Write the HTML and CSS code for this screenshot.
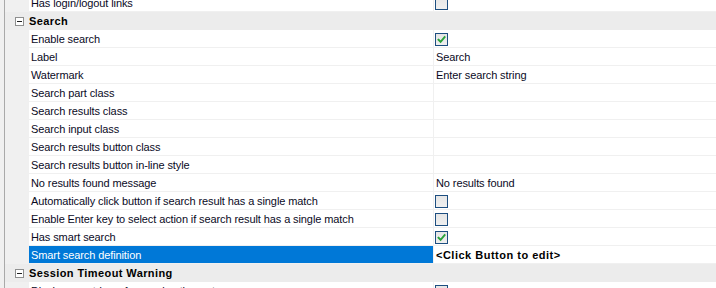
FILE: index.html
```html
<!DOCTYPE html>
<html>
<head>
<meta charset="utf-8">
<link rel="stylesheet" href="styles.css">
</head>
<body>
<div class="panel">
  <div class="grid">
    <div class="row first">
      <div class="gutter"></div>
      <div class="name">Has login/logout links</div>
      <div class="value"><span class="cb"></span></div>
    </div>
    <div class="row cat">
      <div class="gutter"><span class="toggle"></span></div>
      <div class="cat-name">Search</div>
    </div>
    <div class="row">
      <div class="gutter"></div>
      <div class="name">Enable search</div>
      <div class="value"><span class="cb checked"><svg viewBox="0 0 11 11" width="11" height="11"><path d="M2.5 5.8 L4.6 7.8 L8.6 3.2" fill="none" stroke="#2aa23a" stroke-width="1.9" stroke-linecap="square"/></svg></span></div>
    </div>
    <div class="row">
      <div class="gutter"></div>
      <div class="name">Label</div>
      <div class="value">Search</div>
    </div>
    <div class="row">
      <div class="gutter"></div>
      <div class="name">Watermark</div>
      <div class="value">Enter search string</div>
    </div>
    <div class="row">
      <div class="gutter"></div>
      <div class="name">Search part class</div>
      <div class="value"></div>
    </div>
    <div class="row">
      <div class="gutter"></div>
      <div class="name">Search results class</div>
      <div class="value"></div>
    </div>
    <div class="row">
      <div class="gutter"></div>
      <div class="name">Search input class</div>
      <div class="value"></div>
    </div>
    <div class="row">
      <div class="gutter"></div>
      <div class="name">Search results button class</div>
      <div class="value"></div>
    </div>
    <div class="row">
      <div class="gutter"></div>
      <div class="name">Search results button in-line style</div>
      <div class="value"></div>
    </div>
    <div class="row">
      <div class="gutter"></div>
      <div class="name">No results found message</div>
      <div class="value">No results found</div>
    </div>
    <div class="row">
      <div class="gutter"></div>
      <div class="name">Automatically click button if search result has a single match</div>
      <div class="value"><span class="cb"></span></div>
    </div>
    <div class="row">
      <div class="gutter"></div>
      <div class="name">Enable Enter key to select action if search result has a single match</div>
      <div class="value"><span class="cb"></span></div>
    </div>
    <div class="row">
      <div class="gutter"></div>
      <div class="name">Has smart search</div>
      <div class="value"><span class="cb checked"><svg viewBox="0 0 11 11" width="11" height="11"><path d="M2.5 5.8 L4.6 7.8 L8.6 3.2" fill="none" stroke="#2aa23a" stroke-width="1.9" stroke-linecap="square"/></svg></span></div>
    </div>
    <div class="row selected">
      <div class="gutter"></div>
      <div class="name">Smart search definition</div>
      <div class="value bold">&lt;Click Button to edit&gt;</div>
    </div>
    <div class="row cat">
      <div class="gutter"><span class="toggle"></span></div>
      <div class="cat-name">Session Timeout Warning</div>
    </div>
    <div class="row">
      <div class="gutter"></div>
      <div class="name">Display countdown for session timeout</div>
      <div class="value"><span class="cb"></span></div>
    </div>
  </div>
</div>
</body>
</html>
```
FILE: styles.css
```css
html, body {
  margin: 0;
  padding: 0;
  background: #f0f0f0;
  overflow: hidden;
}
body {
  font-family: "Liberation Sans", Arial, sans-serif;
  font-size: 11px;
  letter-spacing: -0.1px;
  color: #0a0a1e;
}
.panel {
  height: 288px;
  padding-left: 4px;
  overflow: hidden;
}
.grid {
  border-left: 1px solid #a9a9a9;
  background: #fff;
  margin-top: -6px;
}
.row {
  display: flex;
  height: 17px;
  border-bottom: 1px solid #f0f0f0;
  line-height: 18px;
  white-space: nowrap;
}
.gutter {
  width: 24px;
  flex: none;
  background: #f0f0f0;
  position: relative;
}
.name {
  width: 401px;
  flex: none;
  padding-left: 2px;
  padding-right: 1px;
  overflow: hidden;
  border-right: 1px solid #f0f0f0;
}
.value {
  flex: 1;
  padding-left: 2px;
  display: flex;
  align-items: center;
}
.cat {
  background: #ececec;
  border-bottom-color: #ececec;
}
.cat .gutter {
  background: #ececec;
}
.cat-name {
  font-weight: bold;
  letter-spacing: 0.4px;
  color: #000;
}
.toggle {
  position: absolute;
  left: 10px;
  top: 5px;
  width: 7px;
  height: 7px;
  border: 1px solid #8e8f8f;
  background: #fff;
}
.toggle::after {
  content: "";
  position: absolute;
  left: 1px;
  top: 3px;
  width: 5px;
  height: 1px;
  background: #202020;
}
.cb {
  width: 11px;
  height: 11px;
  border: 1px solid #1d4e80;
  background: linear-gradient(#e6e6e6, #efefef);
  display: block;
  margin-left: -1px;
  margin-top: 1px;
}
.cb svg {
  display: block;
}
.selected .name {
  background: #0078d7;
  color: #fff;
}
.bold {
  font-weight: bold;
  letter-spacing: 0.5px;
  color: #000;
}
```
